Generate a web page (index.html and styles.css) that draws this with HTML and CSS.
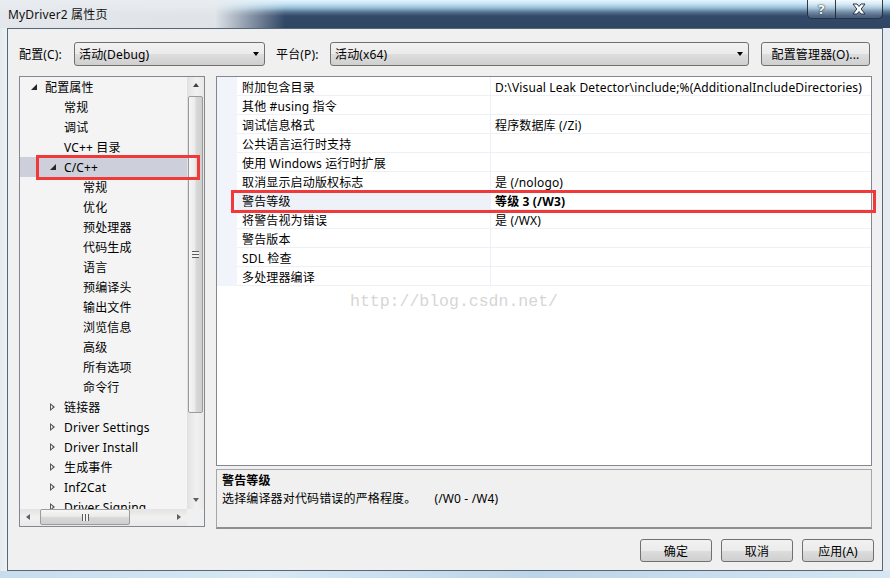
FILE: index.html
```html
<!DOCTYPE html>
<html lang="zh-CN">
<head>
<meta charset="utf-8">
<title>MyDriver2 属性页</title>
<link rel="stylesheet" href="styles.css">
</head>
<body>
<div class="win">
  <div class="titlebar">
    <span class="title">MyDriver2 属性页</span>
    <div class="caption">
      <div class="cbtn help">?</div>
      <div class="cbtn close">
        <svg width="16" height="12" viewBox="0 0 16 12"><path d="M2 1 H6 L8 3.5 L10 1 H14 L10.2 6 L14 11 H10 L8 8.5 L6 11 H2 L5.8 6 Z" fill="#fff" stroke="#2a3442" stroke-width="1"/></svg>
      </div>
    </div>
  </div>
  <div class="client">
    <div class="toolbar">
      <span class="lbl lbl1">配置(C):</span>
      <div class="combo c1"><span>活动(Debug)</span><i class="drop"></i></div>
      <span class="lbl lbl2">平台(P):</span>
      <div class="combo c2"><span>活动(x64)</span><i class="drop"></i></div>
      <div class="btn mgr">配置管理器(O)...</div>
    </div>
    <div class="main">
      <div class="tree">
        <div class="tree-list">
          <div class="node l0"><i class="tw exp"></i><span>配置属性</span></div>
          <div class="node l1"><i class="tw"></i><span>常规</span></div>
          <div class="node l1"><i class="tw"></i><span>调试</span></div>
          <div class="node l1"><i class="tw"></i><span>VC++ 目录</span></div>
          <div class="node l1 sel"><i class="tw exp"></i><span>C/C++</span></div>
          <div class="node l2"><span>常规</span></div>
          <div class="node l2"><span>优化</span></div>
          <div class="node l2"><span>预处理器</span></div>
          <div class="node l2"><span>代码生成</span></div>
          <div class="node l2"><span>语言</span></div>
          <div class="node l2"><span>预编译头</span></div>
          <div class="node l2"><span>输出文件</span></div>
          <div class="node l2"><span>浏览信息</span></div>
          <div class="node l2"><span>高级</span></div>
          <div class="node l2"><span>所有选项</span></div>
          <div class="node l2"><span>命令行</span></div>
          <div class="node l1"><i class="tw col"></i><span>链接器</span></div>
          <div class="node l1"><i class="tw col"></i><span>Driver Settings</span></div>
          <div class="node l1"><i class="tw col"></i><span>Driver Install</span></div>
          <div class="node l1"><i class="tw col"></i><span>生成事件</span></div>
          <div class="node l1"><i class="tw col"></i><span>Inf2Cat</span></div>
          <div class="node l1"><i class="tw col"></i><span>Driver Signing</span></div>
        </div>
        <div class="vscroll">
          <div class="arrow up"></div>
          <div class="vtrack"><div class="vthumb"><i class="grip-h"></i></div></div>
          <div class="arrow down"></div>
        </div>
        <div class="hscroll">
          <div class="arrow left"></div>
          <div class="htrack"><div class="hthumb"><i class="grip-v"></i></div></div>
          <div class="arrow right"></div>
        </div>
        <div class="corner"></div>
        <div class="mark mark-tree"></div>
      </div>
      <div class="right">
        <div class="grid">
          <div class="row"><div class="gut"></div><div class="name">附加包含目录</div><div class="val">D:\Visual Leak Detector\include;%(AdditionalIncludeDirectories)</div></div>
          <div class="row"><div class="gut"></div><div class="name">其他 #using 指令</div><div class="val"></div></div>
          <div class="row"><div class="gut"></div><div class="name">调试信息格式</div><div class="val">程序数据库 (/Zi)</div></div>
          <div class="row"><div class="gut"></div><div class="name">公共语言运行时支持</div><div class="val"></div></div>
          <div class="row"><div class="gut"></div><div class="name">使用 Windows 运行时扩展</div><div class="val"></div></div>
          <div class="row"><div class="gut"></div><div class="name">取消显示启动版权标志</div><div class="val">是 (/nologo)</div></div>
          <div class="row cur"><div class="gut"></div><div class="name">警告等级</div><div class="val bold">等级 3 (/W3)</div></div>
          <div class="row"><div class="gut"></div><div class="name">将警告视为错误</div><div class="val">是 (/WX)</div></div>
          <div class="row"><div class="gut"></div><div class="name">警告版本</div><div class="val"></div></div>
          <div class="row"><div class="gut"></div><div class="name">SDL 检查</div><div class="val"></div></div>
          <div class="row"><div class="gut"></div><div class="name">多处理器编译</div><div class="val"></div></div>
          <div class="watermark">http://blog.csdn.net/</div>
          <div class="mark mark-grid"></div>
        </div>
        <div class="desc">
          <div class="desc-title">警告等级</div>
          <div>选择编译器对代码错误的严格程度。<span class="opt">(/W0 - /W4)</span></div>
        </div>
      </div>
    </div>
    <div class="buttons">
      <div class="btn">确定</div>
      <div class="btn">取消</div>
      <div class="btn">应用(A)</div>
    </div>
  </div>
  <div class="frame-bottom"></div>
</div>
</body>
</html>
```
FILE: styles.css
```css
* { box-sizing: border-box; }
html, body { margin: 0; padding: 0; }
body {
  width: 890px;
  height: 578px;
  overflow: hidden;
  font-family: "Noto Sans", "Noto Sans CJK SC", sans-serif;
  font-size: 12px;
  letter-spacing: 0.15px;
  color: #000;
}
.win {
  width: 890px;
  height: 578px;
  display: flex;
  flex-direction: column;
  background: linear-gradient(to right, #e4eaf0 0, #eef2f5 8px, #c9d4de 50%, #e4ebf1 100%);
}
/* title bar */
.titlebar {
  height: 28px;
  flex: none;
  display: flex;
  align-items: flex-start;
  padding-left: 8px;
  padding-right: 7px;
  background:
    linear-gradient(to right, rgba(233,236,239,0.97) 0, rgba(233,236,239,0.95) 215px, rgba(233,236,239,0) 285px),
    linear-gradient(to bottom, #e3f3fb 0, #c3e3f4 4px, #95bbd3 8px, #58738f 12px, #33496a 16px, #2f4562 28px);
}
.title {
  line-height: 16px;
  margin-top: 7px;
  color: #111;
}
.caption {
  margin-left: auto;
  display: flex;
}
.cbtn {
  height: 19px;
  border: 1px solid rgba(28,38,52,0.9);
  border-top: none;
  background: linear-gradient(to bottom, rgba(255,255,255,0.55), rgba(200,215,228,0.35) 50%, rgba(120,140,160,0.35));
  display: flex;
  align-items: center;
  justify-content: center;
}
.help {
  width: 28px;
  border-right: none;
  border-bottom-left-radius: 5px;
  color: #fff;
  font-weight: bold;
  font-size: 13px;
  text-shadow: 0 0 1px #233, 0 0 2px #233;
}
.close {
  width: 48px;
  border-bottom-right-radius: 5px;
}
/* client */
.client {
  height: 543px;
  flex: none;
  margin: 0 7px;
  border: 1px solid #56677a;
  background: #f0f0f0;
  padding: 13px 8px 0 11px;
  display: flex;
  flex-direction: column;
}
.frame-bottom {
  flex: 1;
  background: linear-gradient(to right, #c7dcec, #d8e8f4 30%, #bcd4e8 60%, #d6e6f2);
}
.toolbar {
  height: 24px;
  display: flex;
  align-items: center;
}
.lbl1 { width: 55px; }
.lbl2 { width: 54px; margin-left: 11px; }
.combo {
  height: 24px;
  border: 1px solid #707070;
  border-radius: 3px;
  background: linear-gradient(to bottom, #f2f2f2 0, #ebebeb 50%, #dddddd 51%, #cfcfcf 100%);
  display: flex;
  align-items: center;
  padding-left: 4px;
  padding-right: 4px;
}
.combo span { flex: 1; }
.c1 { width: 191px; }
.c2 { width: 419px; }
.drop {
  width: 0; height: 0;
  border-left: 3.5px solid transparent;
  border-right: 3.5px solid transparent;
  border-top: 4px solid #000;
  margin-right: 1px;
}
.btn {
  height: 23px;
  width: 72px;
  border: 1px solid #707070;
  border-radius: 3px;
  background: linear-gradient(to bottom, #f2f2f2 0, #ebebeb 50%, #dddddd 51%, #cfcfcf 100%);
  display: flex;
  align-items: center;
  justify-content: center;
}
.mgr { width: 109px; height: 24px; margin-left: 12px; }
/* main */
.main {
  margin-top: 10px;
  height: 453px;
  display: flex;
  align-items: flex-start;
}
.tree {
  position: relative;
  width: 186px;
  height: 451px;
  border: 1px solid #828790;
  background: #f4f4f4;
  display: grid;
  grid-template-columns: 167px 17px;
  grid-template-rows: 432px 17px;
}
.tree-list { overflow: hidden; }
.node {
  height: 20px;
  display: flex;
  align-items: center;
  white-space: nowrap;
}
.node span { line-height: 20px; padding-top: 2px; }
.l0 { padding-left: 6px; }
.l1 { padding-left: 25px; }
.l2 { padding-left: 63px; }
.node.sel { background: #cdd0db; }
.tw {
  width: 19px;
  height: 20px;
  position: relative;
  flex: none;
}
.tw.exp::before {
  content: "";
  position: absolute;
  left: 5px; top: 7px;
  width: 0; height: 0;
  border-left: 6px solid transparent;
  border-bottom: 6px solid #262626;
}
.tw.col::before {
  content: "";
  position: absolute;
  left: 5px; top: 6px;
  width: 0; height: 0;
  border-top: 4.5px solid transparent;
  border-bottom: 4.5px solid transparent;
  border-left: 5px solid #555;
}
.tw.col::after {
  content: "";
  position: absolute;
  left: 6px; top: 8px;
  width: 0; height: 0;
  border-top: 2.5px solid transparent;
  border-bottom: 2.5px solid transparent;
  border-left: 2.8px solid #f4f4f4;
}
.vscroll {
  background: linear-gradient(to right, #e3e3e3, #f1f1f1 50%, #e9e9e9);
  border-left: 1px solid #e0e0e0;
  display: flex;
  flex-direction: column;
}
.arrow { position: relative; flex: none; }
.arrow.up, .arrow.down { height: 17px; }
.arrow.left, .arrow.right { width: 17px; }
.arrow::before {
  content: "";
  position: absolute;
  width: 0; height: 0;
}
.arrow.up::before {
  left: 5px; top: 6px;
  border-left: 3.5px solid transparent;
  border-right: 3.5px solid transparent;
  border-bottom: 4px solid #404040;
}
.arrow.down::before {
  left: 5px; top: 6px;
  border-left: 3.5px solid transparent;
  border-right: 3.5px solid transparent;
  border-top: 4px solid #606060;
}
.arrow.left::before {
  left: 6px; top: 5px;
  border-top: 3.5px solid transparent;
  border-bottom: 3.5px solid transparent;
  border-right: 4px solid #606060;
}
.arrow.right::before {
  left: 7px; top: 5px;
  border-top: 3.5px solid transparent;
  border-bottom: 3.5px solid transparent;
  border-left: 4px solid #606060;
}
.vtrack { flex: 1; padding: 2px 1px 0 0; }
.vthumb {
  height: 317px;
  border: 1px solid #9b9b9b;
  border-radius: 2px;
  background: linear-gradient(to right, #f6f6f6, #ebebeb 45%, #d8d8d8 55%, #cfcfcf);
  display: flex;
  align-items: center;
  justify-content: center;
}
.grip-h {
  width: 7px; height: 7px;
  background: repeating-linear-gradient(to bottom, #5c5c5c 0, #5c5c5c 1px, #f2f2f2 1px, #f2f2f2 3px);
}
.hscroll {
  background: linear-gradient(to bottom, #e3e3e3, #f1f1f1 50%, #e9e9e9);
  display: flex;
}
.htrack { flex: 1; padding: 0 0 1px 3px; }
.hthumb {
  width: 90px;
  height: 100%;
  border: 1px solid #9b9b9b;
  border-radius: 2px;
  background: linear-gradient(to bottom, #f6f6f6, #ebebeb 45%, #d8d8d8 55%, #cfcfcf);
  display: flex;
  align-items: center;
  justify-content: center;
}
.grip-v {
  width: 7px; height: 7px;
  background: repeating-linear-gradient(to right, #5c5c5c 0, #5c5c5c 1px, #f2f2f2 1px, #f2f2f2 3px);
}
.corner { background: #f0f0f0; }
.mark {
  position: absolute;
  border: 3px solid #f03a3a;
  pointer-events: none;
}
.mark-tree { left: 16px; top: 78px; width: 164px; height: 25px; }
.right {
  width: 656px;
  margin-left: 11px;
  display: flex;
  flex-direction: column;
}
.grid {
  position: relative;
  height: 390px;
  border: 1px solid #828790;
  background: #fff;
}
.row {
  height: 19px;
  display: flex;
}
.gut { width: 20px; flex: none; background: #f1f4fa; }
.name {
  width: 253px;
  flex: none;
  padding-left: 5px;
  padding-top: 3px;
  line-height: 15px;
  border-bottom: 1px solid #edf0f5;
  white-space: nowrap;
}
.val {
  flex: 1;
  padding-left: 4px;
  padding-top: 3px;
  line-height: 15px;
  border-left: 1px solid #edf0f5;
  border-bottom: 1px solid #edf0f5;
  white-space: nowrap;
  overflow: hidden;
}
.row.cur .name { background: #eef1f7; }
.bold { font-weight: bold; }
.watermark {
  position: absolute;
  left: 133px;
  top: 215px;
  font-family: "Liberation Mono", monospace;
  font-size: 16.5px;
  letter-spacing: 0;
  color: #d6d6d6;
}
.mark-grid { left: 14px; top: 113px; width: 645px; height: 23px; }
.desc {
  margin-top: 3px;
  height: 60px;
  border: 1px solid #a6a6a6;
  border-bottom: 2px solid #8f8f8f;
  background: #f0f0f0;
  padding: 2px 5px;
  line-height: 18px;
}
.desc-title { font-weight: bold; }
.opt { margin-left: 18px; }
.buttons {
  margin-top: 10px;
  display: flex;
  justify-content: flex-end;
  gap: 9px;
}
```
